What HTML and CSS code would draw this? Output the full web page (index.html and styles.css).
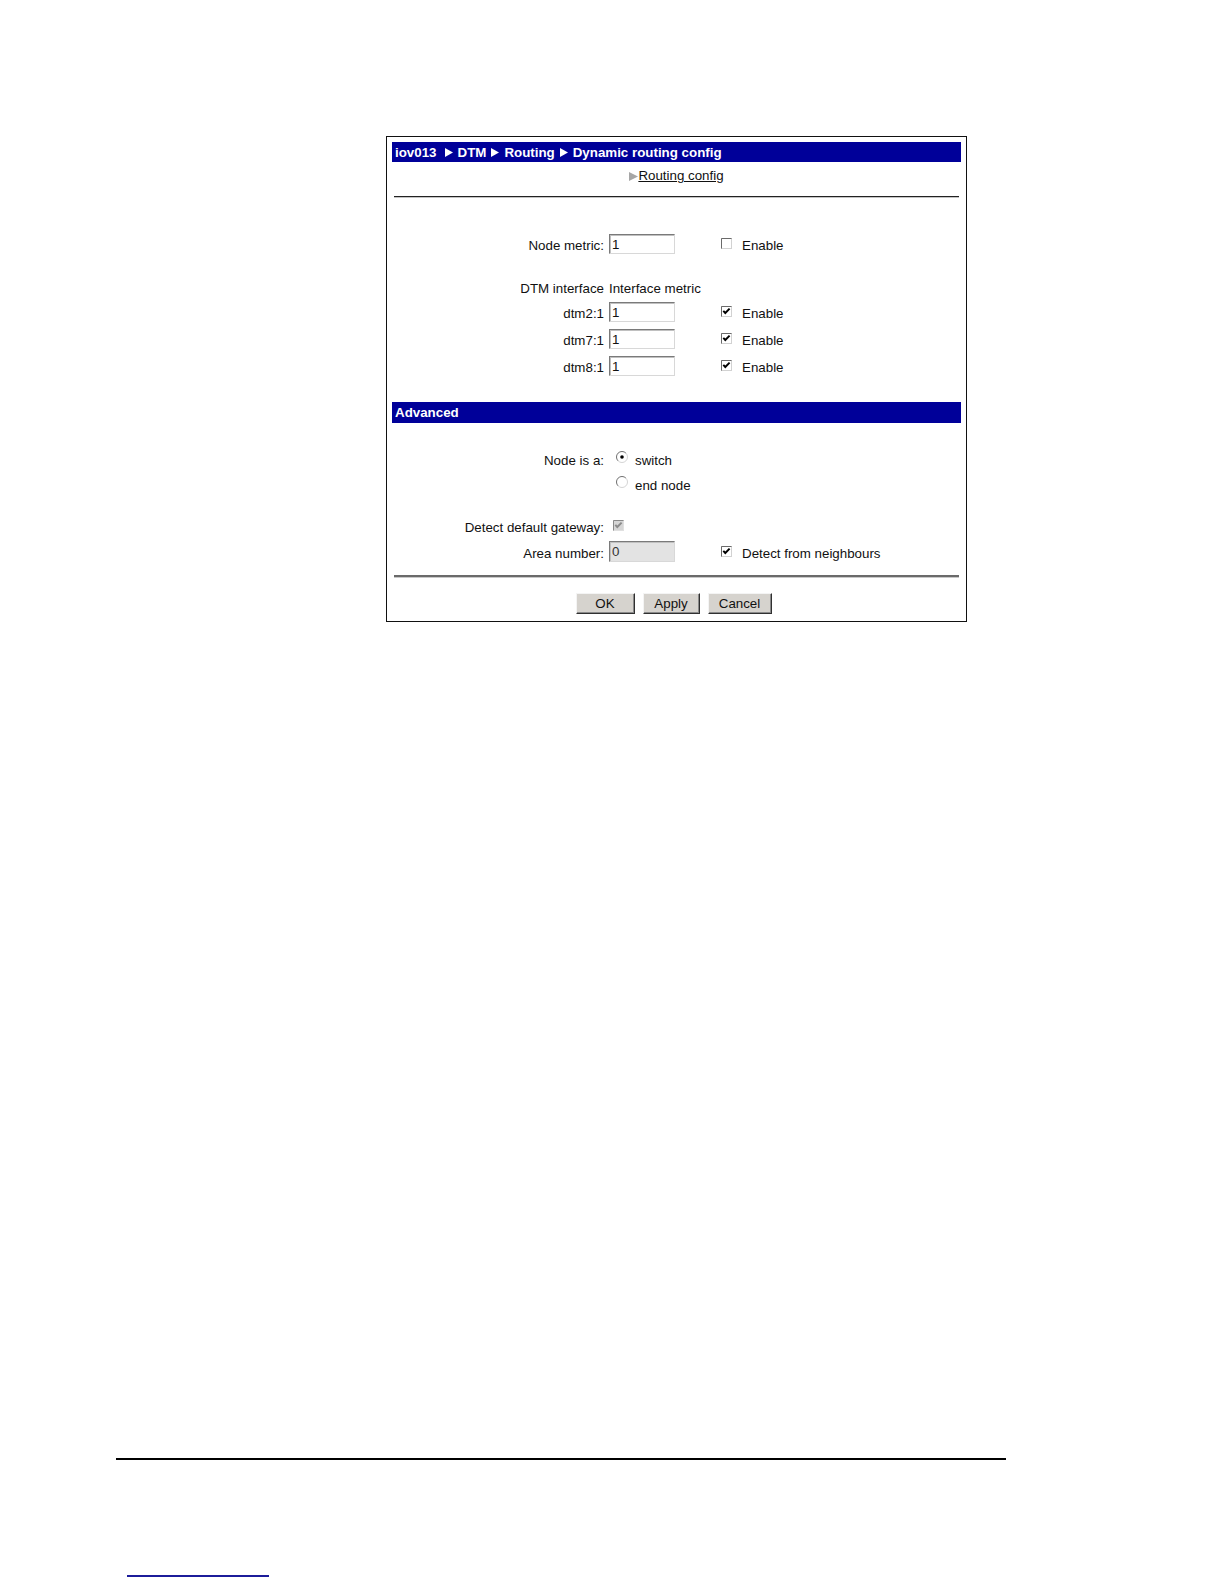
FILE: index.html
```html
<!DOCTYPE html>
<html lang="en">
<head>
<meta charset="utf-8">
<title>Dynamic routing config</title>
<link rel="stylesheet" href="styles.css">
</head>
<body>
<div class="page">
  <div class="panel">
    <div class="titlebar">
      <span>iov013</span>
      <svg class="tri first" viewBox="0 0 8 9" width="8" height="9"><path d="M0 0L8 4.5L0 9Z" fill="#fff"/></svg>
      <span>DTM</span>
      <svg class="tri" viewBox="0 0 8 9" width="8" height="9"><path d="M0 0L8 4.5L0 9Z" fill="#fff"/></svg>
      <span>Routing</span>
      <svg class="tri" viewBox="0 0 8 9" width="8" height="9"><path d="M0 0L8 4.5L0 9Z" fill="#fff"/></svg>
      <span>Dynamic routing config</span>
    </div>
    <div class="subnav"><svg class="gtri" viewBox="0 0 9 9" width="9" height="9"><path d="M0 0L9 4.5L0 9Z" fill="#a6a6a6"/></svg><a class="navlink">Routing config</a></div>
    <div class="rule"></div>

    <div class="form1">
      <div class="row h27">
        <span class="lbl">Node metric:</span>
        <input class="txt" type="text" value="1">
        <span class="opt">
          <svg class="cb" viewBox="0 0 11 11" width="11" height="11"><rect x="0.5" y="0.5" width="10" height="10" fill="#fff" stroke="#d2d2d2"/><path d="M0.5 10.5V0.5H10.5" fill="none" stroke="#6a6a6a"/></svg>
          <span class="t">Enable</span>
        </span>
      </div>
      <div class="row h19 hdrrow">
        <span class="lbl flat">DTM interface</span>
        <span class="wide flat">Interface metric</span>
      </div>
      <div class="row h27">
        <span class="lbl">dtm2:1</span>
        <input class="txt" type="text" value="1">
        <span class="opt">
          <svg class="cb" viewBox="0 0 11 11" width="11" height="11"><rect x="0.5" y="0.5" width="10" height="10" fill="#fff" stroke="#d2d2d2"/><path d="M0.5 10.5V0.5H10.5" fill="none" stroke="#6a6a6a"/><path d="M2.3 4.8L4.3 7L8.6 2.6" fill="none" stroke="#000" stroke-width="1.9"/></svg>
          <span class="t">Enable</span>
        </span>
      </div>
      <div class="row h27">
        <span class="lbl">dtm7:1</span>
        <input class="txt" type="text" value="1">
        <span class="opt">
          <svg class="cb" viewBox="0 0 11 11" width="11" height="11"><rect x="0.5" y="0.5" width="10" height="10" fill="#fff" stroke="#d2d2d2"/><path d="M0.5 10.5V0.5H10.5" fill="none" stroke="#6a6a6a"/><path d="M2.3 4.8L4.3 7L8.6 2.6" fill="none" stroke="#000" stroke-width="1.9"/></svg>
          <span class="t">Enable</span>
        </span>
      </div>
      <div class="row h27">
        <span class="lbl">dtm8:1</span>
        <input class="txt" type="text" value="1">
        <span class="opt">
          <svg class="cb" viewBox="0 0 11 11" width="11" height="11"><rect x="0.5" y="0.5" width="10" height="10" fill="#fff" stroke="#d2d2d2"/><path d="M0.5 10.5V0.5H10.5" fill="none" stroke="#6a6a6a"/><path d="M2.3 4.8L4.3 7L8.6 2.6" fill="none" stroke="#000" stroke-width="1.9"/></svg>
          <span class="t">Enable</span>
        </span>
      </div>
    </div>

    <div class="secbar">Advanced</div>

    <div class="form2">
      <div class="row h25">
        <span class="lbl">Node is a:</span>
        <span class="ropt">
          <svg class="rd" viewBox="0 0 12 12" width="12" height="12"><circle cx="6" cy="6" r="5.5" fill="#fff"/><path d="M2.1 9.9A5.5 5.5 0 0 1 9.9 2.1" fill="none" stroke="#707070"/><path d="M9.9 2.1A5.5 5.5 0 0 1 2.1 9.9" fill="none" stroke="#d4d4d4"/><circle cx="6" cy="6" r="1.8" fill="#000"/></svg>
          <span class="t">switch</span>
        </span>
      </div>
      <div class="row h25">
        <span class="lbl"></span>
        <span class="ropt">
          <svg class="rd" viewBox="0 0 12 12" width="12" height="12"><circle cx="6" cy="6" r="5.5" fill="#fff"/><path d="M2.1 9.9A5.5 5.5 0 0 1 9.9 2.1" fill="none" stroke="#707070"/><path d="M9.9 2.1A5.5 5.5 0 0 1 2.1 9.9" fill="none" stroke="#d4d4d4"/></svg>
          <span class="t">end node</span>
        </span>
      </div>
      <div class="row h26 gw">
        <span class="lbl">Detect default gateway:</span>
        <span class="gwcell">
          <svg class="cb" viewBox="0 0 11 11" width="11" height="11"><rect x="0.5" y="0.5" width="10" height="10" fill="#d6d6d6" stroke="#e0e0e0"/><path d="M0.5 10.5V0.5H10.5" fill="none" stroke="#8a8a8a"/><path d="M2.3 4.8L4.3 7L8.6 2.6" fill="none" stroke="#8c8c8c" stroke-width="1.9"/></svg>
        </span>
      </div>
      <div class="row h26">
        <span class="lbl">Area number:</span>
        <input class="txt dis" type="text" value="0" readonly>
        <span class="opt">
          <svg class="cb" viewBox="0 0 11 11" width="11" height="11"><rect x="0.5" y="0.5" width="10" height="10" fill="#fff" stroke="#d2d2d2"/><path d="M0.5 10.5V0.5H10.5" fill="none" stroke="#6a6a6a"/><path d="M2.3 4.8L4.3 7L8.6 2.6" fill="none" stroke="#000" stroke-width="1.9"/></svg>
          <span class="t">Detect from neighbours</span>
        </span>
      </div>
    </div>

    <div class="rule2"></div>

    <div class="buttons">
      <button class="btn b-ok" type="button">OK</button>
      <button class="btn b-apply" type="button">Apply</button>
      <button class="btn b-cancel" type="button">Cancel</button>
    </div>
  </div>

  <div class="bottomline"></div>
  <div class="footline"></div>
</div>
</body>
</html>
```

FILE: styles.css
```css
html, body {
  margin: 0;
  padding: 0;
  background: #ffffff;
}

body {
  font-family: "Liberation Sans", Arial, sans-serif;
  font-size: 13.33px;
  color: #111111;
}

.page {
  padding-top: 136px;
}

.panel {
  box-sizing: border-box;
  width: 581px;
  margin-left: 386px;
  border: 1px solid #111111;
  padding: 5px 5px 7px 5px;
}

.titlebar,
.secbar {
  display: flex;
  align-items: center;
  background: #000099;
  color: #ffffff;
  font-weight: bold;
  padding-left: 3px;
  white-space: nowrap;
}

.titlebar {
  height: 20px;
}

.secbar {
  height: 21px;
  margin-top: 23px;
}

.tri {
  flex: none;
  margin: 1px 5px 0 5px;
}

.tri.first {
  margin-left: 8px;
}

.subnav {
  box-sizing: border-box;
  height: 24px;
  padding-top: 6px;
  line-height: 16px;
  text-align: center;
}

.gtri {
  vertical-align: -1px;
}

.navlink {
  color: #111111;
  text-decoration: underline;
}

.rule {
  margin: 10px 2px 0 2px;
  border-top: 1px solid #222222;
  border-bottom: 1px solid #c4c4c4;
}

.form1 {
  margin-top: 32px;
}

.form2 {
  margin-top: 23px;
}

.row {
  display: grid;
  grid-template-columns: 212px 66px 1fr;
  column-gap: 5px;
  align-items: center;
}

.h27 { height: 27px; }
.h26 { height: 26px; }
.h25 { height: 25px; }
.h19 { height: 19px; }

.hdrrow {
  margin-top: 22px;
}

.gw {
  margin-top: 16px;
}

.lbl {
  text-align: right;
  white-space: nowrap;
  line-height: 15px;
  padding-top: 4px;
}

.lbl.flat {
  padding-top: 0;
}

.wide {
  grid-column: 2 / 4;
  white-space: nowrap;
  line-height: 15px;
}

.txt {
  box-sizing: border-box;
  width: 66px;
  height: 20px;
  margin: 0;
  padding: 1px 2px 0 2px;
  font-family: "Liberation Sans", Arial, sans-serif;
  font-size: 13.33px;
  color: #111111;
  background: #ffffff;
  border-style: solid;
  border-width: 1px;
  border-color: #7a7a7a #d8d8d8 #d8d8d8 #7a7a7a;
  box-shadow: inset 1px 1px 0 #c0c0c0;
  outline: none;
}

.txt.dis {
  height: 21px;
  background: #e3e3e3;
  color: #333333;
}

.opt {
  display: flex;
  align-items: center;
  padding-left: 41px;
  white-space: nowrap;
}

.cb {
  flex: none;
  display: block;
}

.opt .cb {
  margin-right: 10px;
}

.t {
  line-height: 15px;
  padding-top: 4px;
}

.ropt {
  grid-column: 2 / 4;
  display: flex;
  align-items: center;
  padding-left: 7px;
  white-space: nowrap;
}

.rd {
  flex: none;
  display: block;
  margin-right: 7px;
  margin-bottom: 3px;
}

.gwcell {
  display: flex;
  align-items: center;
  padding-left: 4px;
}

.rule2 {
  margin: 11px 2px 0 2px;
  border-top: 2px solid #6a6a6a;
  border-bottom: 1px solid #c8c8c8;
}

.buttons {
  display: flex;
  justify-content: center;
  gap: 8px;
  margin-top: 15px;
  padding-right: 6px;
}

.btn {
  box-sizing: border-box;
  height: 21px;
  margin: 0;
  padding: 0;
  font-family: "Liberation Sans", Arial, sans-serif;
  font-size: 13.33px;
  color: #111111;
  background: #d6d3ce;
  border-style: solid;
  border-width: 1px;
  border-color: #f4f4f4 #303030 #303030 #f4f4f4;
  box-shadow: inset -1px -1px 0 #8a8a8a;
}

.b-ok { width: 59px; }
.b-apply { width: 57px; }
.b-cancel { width: 64px; }

.bottomline {
  width: 890px;
  height: 2px;
  margin: 836px 0 0 116px;
  background: #000000;
}

.footline {
  width: 142px;
  height: 2px;
  margin: 115px 0 0 127px;
  background: #1c1c9a;
}
```
